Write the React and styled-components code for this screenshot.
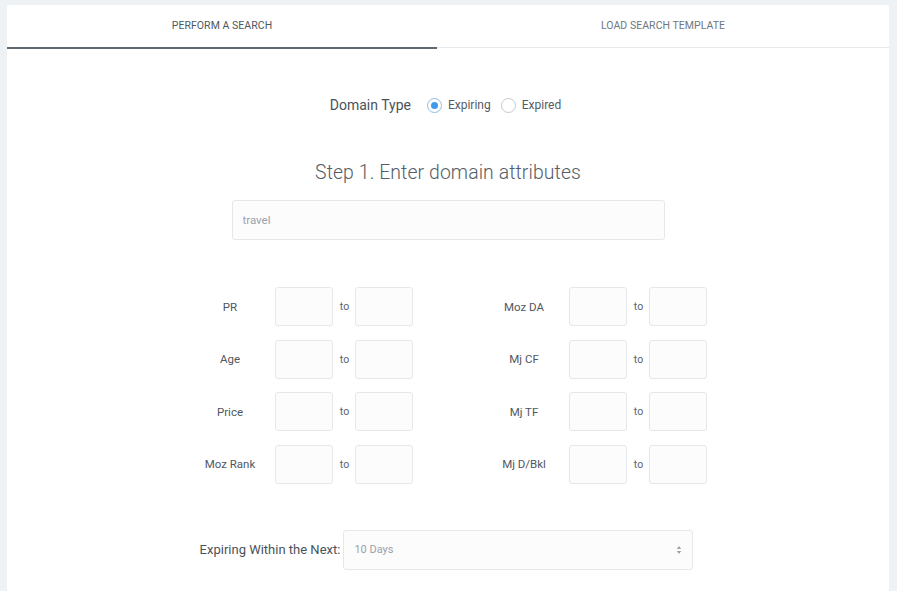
import React from "react";
import styled, { createGlobalStyle } from "styled-components";

const GlobalStyle = createGlobalStyle`
  html, body {
    margin: 0;
    padding: 0;
    background: #eef2f5;
    font-family: "Roboto", "Liberation Sans", sans-serif;
    color: #4d555d;
  }
  * { box-sizing: border-box; }
`;

const ranges = [
  ["PR", "Moz DA"],
  ["Age", "Mj CF"],
  ["Price", "Mj TF"],
  ["Moz Rank", "Mj D/Bkl"],
];

const App = () => {
  return (
    <Page>
      <GlobalStyle />
      <Card>
        <Tabs>
          <Tab active>PERFORM A SEARCH</Tab>
          <Tab>LOAD SEARCH TEMPLATE</Tab>
        </Tabs>
        <Body>
          <TypeRow>
            <TypeLabel>Domain Type</TypeLabel>
            <RadioOption>
              <Radio checked />
              Expiring
            </RadioOption>
            <RadioOption>
              <Radio />
              Expired
            </RadioOption>
          </TypeRow>
          <StepTitle>Step 1. Enter domain attributes</StepTitle>
          <KeywordInput placeholder="travel" />
          <RangeGrid>
            {[0, 1].map((col) => (
              <RangeColumn key={col}>
                {ranges.map((pair) => (
                  <RangeRow key={pair[col]}>
                    <RangeLabel>{pair[col]}</RangeLabel>
                    <Box />
                    <To>to</To>
                    <Box />
                  </RangeRow>
                ))}
              </RangeColumn>
            ))}
          </RangeGrid>
          <SelectRow>
            <SelectLabel>Expiring Within the Next:</SelectLabel>
            <Select>
              <span>10 Days</span>
              <Arrows viewBox="0 0 6 10" width="6" height="10">
                <path d="M3 1 L5.2 4 H0.8 Z M3 9 L5.2 6 H0.8 Z" fill="#9aa2a9" />
              </Arrows>
            </Select>
          </SelectRow>
        </Body>
      </Card>
    </Page>
  );
};

const Page = styled.div`
  padding: 5px 8px 0 7px;
  min-height: 591px;
`;

const Card = styled.div`
  background: #fff;
  min-height: 586px;
`;

const Tabs = styled.div`
  display: grid;
  grid-template-columns: 430px 1fr;
  height: 44px;
`;

const Tab = styled.div`
  display: flex;
  align-items: center;
  justify-content: center;
  padding-bottom: 1px;
  font-size: 10.5px;
  letter-spacing: 0.05px;
  color: ${(p) => (p.active ? "#4f5860" : "#6e777f")};
  border-bottom: ${(p) => (p.active ? "2px solid #5e6a73" : "1px solid #e6eaed")};
  ${(p) => (p.active ? "" : "margin-bottom: 1px;")}
`;

const Body = styled.div`
  display: flex;
  flex-direction: column;
  align-items: center;
  padding-top: 46px;
`;

const TypeRow = styled.div`
  display: flex;
  align-items: center;
  height: 20px;
  padding-left: 5px;
`;

const TypeLabel = styled.span`
  font-size: 14px;
  color: #4a525a;
  margin-right: 16px;
`;

const RadioOption = styled.label`
  display: flex;
  align-items: center;
  font-size: 12px;
  color: #555d65;
  margin-right: 10px;
  gap: 6px;
`;

const Radio = styled.span`
  width: 15px;
  height: 15px;
  border-radius: 50%;
  border: 1px solid ${(p) => (p.checked ? "#8cbde6" : "#c3cad0")};
  display: flex;
  align-items: center;
  justify-content: center;
  &::after {
    content: "";
    width: 7px;
    height: 7px;
    border-radius: 50%;
    background: ${(p) => (p.checked ? "#3e9bea" : "transparent")};
  }
`;

const StepTitle = styled.h2`
  margin: 46px 0 0;
  font-size: 19.4px;
  font-weight: 300;
  color: #555d65;
  letter-spacing: 0.1px;
`;

const KeywordInput = styled.input`
  margin-top: 16px;
  width: 433px;
  height: 40px;
  border: 1px solid #e4e8eb;
  border-radius: 3px;
  background: #fcfcfd;
  padding: 0 10px;
  font-family: inherit;
  font-size: 11.5px;
  outline: none;
  &::placeholder {
    color: #9aa2aa;
  }
`;

const RangeGrid = styled.div`
  margin-top: 47px;
  display: grid;
  grid-template-columns: 223px 223px;
  column-gap: 71px;
  margin-left: 1px;
`;

const RangeColumn = styled.div`
  display: flex;
  flex-direction: column;
  gap: 13.6px;
`;

const RangeRow = styled.div`
  display: grid;
  grid-template-columns: 85px 58px 22px 58px;
  align-items: center;
`;

const RangeLabel = styled.span`
  text-align: center;
  font-size: 11.5px;
  color: #4f575f;
  padding-right: 5px;
`;

const Box = styled.div`
  height: 39px;
  border: 1px solid #e4e8eb;
  border-radius: 3px;
  background: #fcfcfd;
`;

const To = styled.span`
  text-align: center;
  font-size: 10.5px;
  color: #5b636b;
  padding-left: 1px;
`;

const SelectRow = styled.div`
  margin-top: 46px;
  display: flex;
  align-items: center;
  gap: 3px;
  margin-left: -3px;
`;

const SelectLabel = styled.span`
  font-size: 13px;
  color: #4a525a;
`;

const Select = styled.div`
  width: 350px;
  height: 40px;
  border: 1px solid #e4e8eb;
  border-radius: 3px;
  background: #fcfcfd;
  display: flex;
  align-items: center;
  justify-content: space-between;
  padding: 0 10px 0 10px;
  font-size: 11px;
  color: #9aa2aa;
`;

const Arrows = styled.svg`
  display: block;
`;

export default App;
